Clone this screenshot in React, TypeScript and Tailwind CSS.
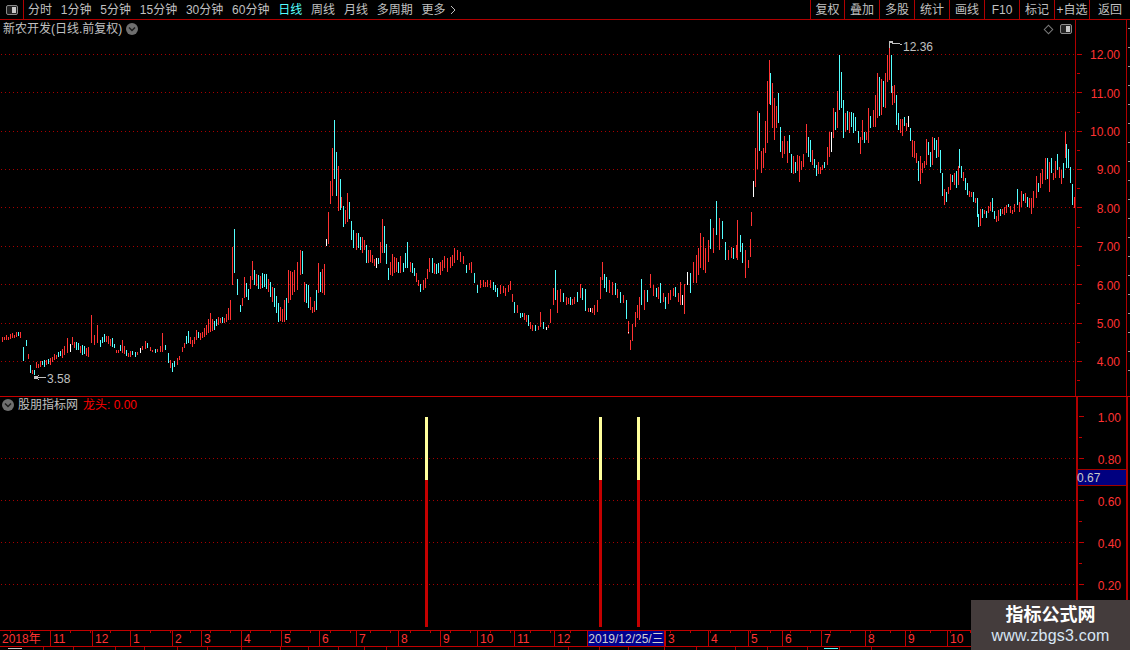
const FONT = "font-['Liberation_Sans','Noto_Sans_CJK_SC',sans-serif]";

// x hi lo [color override], read off the reference; gaps get filled in below
const RAW = `2 337 342,6 335 340,10 334 339,12 333 338,16 332 337,20 332 338,23 347 361 c,26 340 346 c,30 365 373 c,34 370 375 c,36 362 368,40 361 367,44 360 367 c,50 358 365,54 354 360,58 352 357 c,62 349 358,67 338 353,70 344 352 w,72 337 345,76 342 350 c,82 345 355 c,88 347 357,91 315 343,94 335 345,97 325 343,100 340 347 c,104 334 342 c,108 336 344,112 338 347 c,116 350 353,118 350 353,122 340 353,126 350 356 c,130 351 357,135 352 357 c,140 348 353 w,145 341 349,150 347 351,155 349 353 c,160 346 352,162 333 352,165 345 350 c,168 353 363 c,172 363 372 c,177 358 365,182 347 352,188 331 343 c,192 340 347,196 330 340,200 333 340,204 328 337,210 313 332,214 321 330 c,218 317 325,222 317 323 c,226 314 322,228 308 320,230 300 320,232 247 285,234 229 273 c,237 279 295 c,240 305 312 c,242 298 306,244 277 298,248 289 300 c,252 261 280,254 270 285 c,258 275 289 c,262 273 288 c,266 274 289 c,270 282 297 c,274 288 307 c,278 303 322 c,282 309 322,284 300 322,286 298 320 c,288 270 303,290 271 300,294 270 292,297 262 290,300 250 275,302 251 274 c,304 282 302,308 285 308 c,312 307 313,316 290 310 c,318 263 293,320 272 292 c,324 264 295,326 239 246 w,328 212 244,330 181 204,332 148 196,334 120 179 c,336 152 196 c,338 166 211,340 179 210 c,341 197 208,343 206 227 c,345 210 224,347 193 222,349 202 219 c,351 221 240 c,353 230 248 c,356 233 250,358 233 248 c,360 237 250 c,362 237 253,364 240 250,366 245 263 c,370 250 262,372 255 263,376 258 268 w,378 258 264 c,380 242 263,382 219 253,384 226 253 c,386 244 264 c,388 268 280 c,390 262 275,392 254 276,396 258 272,398 262 273 c,400 256 273,403 263 272 c,407 242 268 c,410 262 272,412 263 273 c,416 273 282,420 284 292 c,423 280 290,425 278 288,429 258 272,432 258 273 c,436 264 274 c,440 262 275,444 256 268,447 258 272,450 257 268,454 248 263,457 250 260,460 252 262,463 256 264,466 265 273 c,469 263 270,471 262 273,474 273 283 c,477 285 293 c,480 280 288,483 280 287,487 280 287,490 280 288,493 282 290 c,497 288 297 c,500 285 294,503 286 293,505 288 296,508 285 292,510 281 290,514 302 313 c,517 305 313,520 313 318 c,524 313 320,528 315 326 c,532 325 331,535 325 331 c,538 326 330,540 312 327,543 322 329 c,546 327 330 w,548 325 328,550 309 323,553 288 305,555 270 300 c,557 290 313,560 289 302,563 293 302 c,566 297 305,570 297 305 c,574 297 304,577 292 302 c,580 284 298,582 288 300 c,585 289 311 c,588 308 312,590 308 312 w,594 305 315,597 300 312,600 277 299,602 262 280,604 274 288 c,606 277 292 c,609 280 293,612 282 295,615 283 295 c,620 292 303 c,623 295 303,626 300 319 c,630 340 350,632 324 341,635 312 327,637 305 318,639 297 320,641 279 305 c,644 290 310,647 290 302 c,650 274 288,653 285 296,656 288 297 c,660 283 303 c,663 293 302,665 297 309 c,668 293 304,670 290 300,673 288 296,675 287 297 c,678 293 302,680 282 305,682 295 305 w,684 284 314,687 272 285 w,690 273 293 c,693 262 283,696 255 283,698 248 275,700 233 268,703 237 270,705 248 273,708 240 262,710 219 249 c,713 228 253,716 201 235 c,719 218 250,722 221 239 c,725 242 260 c,728 250 260,731 247 258,733 248 259 c,736 245 258,737 220 260,740 235 252 c,742 243 263 c,745 250 278,748 260 268,750 239 257,751 212 226,753 181 197 w,755 148 187,757 111 169,759 113 151 c,761 151 173,763 148 168,765 121 153,767 81 143,769 60 104,770 73 105 c,772 83 128,774 98 140,776 106 128,778 93 123 c,780 127 152 c,782 141 158,784 136 154,787 141 163,789 135 153 c,791 154 173 c,793 156 174,795 162 173 c,797 155 171,799 156 182,801 161 170,803 154 167,806 124 153,808 137 157 c,810 140 162 c,812 150 165,814 159 168 c,816 165 176 c,818 162 174,820 167 174,822 165 170,824 162 168 c,827 147 165,829 132 157,831 132 152 w,833 108 138,835 112 130 c,837 91 128,839 55 110 c,841 72 108 c,843 100 138 c,845 113 132,847 111 130 c,849 112 133,851 112 127 c,853 113 133 c,855 117 131 c,858 131 143 c,860 137 154,862 120 140,864 132 143 c,866 132 140,868 108 143,870 116 128 c,873 110 127,875 95 127,877 73 118,879 77 116 c,881 79 115,883 81 107 c,885 73 108,887 55 82,889 42 80,891 55 93 c,892 86 105,894 85 103,896 95 125 c,898 113 130 c,900 119 133,902 119 136,904 117 126 c,906 123 131,908 116 127 w,910 128 141 c,912 140 157,914 141 158,916 153 163,918 161 181 c,920 156 184,922 163 173,924 161 168,926 139 165,928 142 155 c,930 152 167 c,932 137 165,934 138 150 c,936 140 158 c,938 137 157,940 150 173 c,942 173 196 c,944 189 205,946 192 202 c,948 187 194,950 174 190,952 175 182 c,954 173 185,956 171 188 c,958 166 185,959 149 168 c,961 166 178 c,963 172 181,965 178 190 c,967 183 195 c,969 191 197,971 192 197,973 192 202 c,975 198 203,977 198 217 c,978 214 227 c,980 209 226,982 209 218 c,984 210 214,986 211 218 c,988 206 213,990 202 211,992 198 212 c,994 211 219 c,996 216 222,998 210 221,1000 209 216 c,1002 209 214,1004 207 215,1006 205 213,1008 204 207 c,1010 206 213,1012 210 214,1014 204 212,1017 189 205 c,1019 202 212,1021 191 207,1023 194 201 c,1025 193 203,1027 197 207 c,1029 198 208,1031 198 214,1033 191 208,1036 176 198,1038 183 192 c,1040 173 188,1042 169 184,1045 158 180,1047 158 179 c,1049 162 192,1051 158 173 c,1053 173 180,1055 161 178,1057 154 170 c,1059 167 178,1061 170 184,1063 163 178 c,1065 132 158,1066 144 168 c,1068 149 168 c,1070 167 183 c,1072 184 205 c,1074 197 208`;

type Bar = { x: number; hi: number; lo: number; color: string };

const RED = "#ff3232";
const CYAN = "#54ffff";

function buildBars(): Bar[] {
  const pts = RAW.split(",").map((s) => {
    const [x, hi, lo, c] = s.split(" ");
    return { x: +x, hi: +hi, lo: +lo, c };
  });
  const bars: Bar[] = [];
  pts.forEach((p, i) => {
    const color = p.c === "c" ? CYAN : p.c === "w" ? "#ffffff" : RED;
    bars.push({ x: p.x, hi: p.hi, lo: p.lo, color });
    const next = pts[i + 1];
    if (!next) return;
    // fill anything wider than one 2px slot, a bit shorter than the read bars
    for (let x = p.x + 2; x < next.x - 1; x += 2) {
      const t = (x - p.x) / (next.x - p.x);
      const wob = ((x * 7) % 3) - 1;
      const hi = Math.round(p.hi + (next.hi - p.hi) * t + wob) + 1;
      const lo = Math.round(p.lo + (next.lo - p.lo) * t + wob) - 1;
      bars.push({ x, hi, lo: Math.max(lo, hi + 2), color: x % 3 === 0 ? CYAN : RED });
    }
  });
  return bars;
}

const bars = buildBars();

function barPath(color: string) {
  return bars
    .filter((b) => b.color === color)
    .map((b) => `M${b.x + 0.5} ${b.hi}V${b.lo}`)
    .join("");
}

const periods = ["分时", "1分钟", "5分钟", "15分钟", "30分钟", "60分钟", "日线", "周线", "月线", "多周期"];
const tools = [
  ["复权", "w-[34px]"],
  ["叠加", "w-[35px]"],
  ["多股", "w-[35px]"],
  ["统计", "w-[35px]"],
  ["画线", "w-[35px]"],
  ["F10", "w-[35px]"],
  ["标记", "w-[35px]"],
  ["+自选", "w-[35px]"],
  ["返回", "w-[41px]"],
];
const prices = ["12.00", "11.00", "10.00", "9.00", "8.00", "7.00", "6.00", "5.00", "4.00"];
const levels = ["1.00", "0.80", "0.60", "0.40", "0.20"];
// [label, x of the divider on its left]
const months: [string, number][] = [
  ["11", 50], ["12", 92], ["1", 130], ["2", 172], ["3", 201], ["4", 241], ["5", 281], ["6", 319], ["7", 356],
  ["8", 398], ["9", 440], ["10", 477], ["11", 514], ["12", 554], ["3", 665], ["4", 708], ["5", 748], ["6", 782],
  ["7", 821], ["8", 865], ["9", 905], ["10", 947],
];
const footerStops = [43, 73, 115, 144, 177, 207, 241, 280, 308, 338, 364, 386, 568, 599, 628, 664, 696, 735, 767, 807, 839, 871];

function Chevron({ className }: { className: string }) {
  return (
    <svg viewBox="0 0 12 12" className={className}>
      <circle cx="6" cy="6" r="6" fill="#6f6f6f" />
      <path d="M3 4.5 6 7.5 9 4.5" fill="none" stroke="#1c1c1c" strokeWidth="1.5" />
    </svg>
  );
}

function PanelToggle({ className }: { className: string }) {
  return (
    <svg viewBox="0 0 12 10" className={className}>
      <rect x="0.5" y="0.5" width="11" height="9" rx="1.5" fill="#222" stroke="#8a8a8a" />
      <rect x="6" y="2" width="4" height="6" fill="#c8c8c8" />
    </svg>
  );
}

function Dots({ y, width }: { y: number; width: number }) {
  return <line x1="1" x2={width} y1={y + 0.5} y2={y + 0.5} stroke="#a80000" strokeDasharray="1 3" />;
}

function PriceChart() {
  return (
    <svg width="1075" height="376" viewBox="0 20 1075 376" shapeRendering="crispEdges" className="block">
      {[54, 92, 131, 169, 207, 246, 284, 323, 361].map((y) => (
        <Dots key={y} y={y} width={1075} />
      ))}
      <path d={barPath(RED)} stroke={RED} fill="none" />
      <path d={barPath(CYAN)} stroke={CYAN} fill="none" />
      <path d={barPath("#ffffff")} stroke="#ffffff" fill="none" />
      <rect x="628" y="332" width="1" height="1" fill="#fff" />
      <g stroke="#c0c0c0" fill="none">
        <path d="M889.5 48V41H893M890 42 895 44 898 43 902 45" />
        <path d="M36 377.5H46M36 377.5 39 375M36 377.5 39 380" />
      </g>
      <rect x="34" y="376" width="2" height="3" fill="#c0c0c0" />
    </svg>
  );
}

function IndicatorChart() {
  return (
    <svg width="1076" height="233" viewBox="0 397 1076 233" shapeRendering="crispEdges" className="block">
      {[458, 500, 542, 584].map((y) => (
        <Dots key={y} y={y} width={1075} />
      ))}
      {[425, 599, 637].map((x) => (
        <g key={x}>
          <rect x={x} y="417" width="3" height="63" fill="#ffff9c" />
          <rect x={x} y="480" width="3" height="147" fill="#c40000" />
        </g>
      ))}
    </svg>
  );
}

function AxisTicks({ major, minor, top, height }: { major: number[]; minor: number[]; top: number; height: number }) {
  return (
    <svg width="55" height={height} viewBox={`1075 ${top} 55 ${height}`} shapeRendering="crispEdges" className="absolute left-0 top-0">
      {major.map((y) => (
        <line key={y} x1="1076" x2="1081" y1={y + 0.5} y2={y + 0.5} stroke="#c00000" />
      ))}
      {minor.map((y) => (
        <line key={y} x1="1076" x2="1079" y1={y + 0.5} y2={y + 0.5} stroke="#c00000" />
      ))}
      {Array.from({ length: Math.floor(height / 19) }, (_, i) => top + 8 + i * 19).map((y) => (
        <line key={y} x1="1127" x2="1130" y1={y + 0.5} y2={y + 0.5} stroke="#9a9a9a" />
      ))}
    </svg>
  );
}

export default function App() {
  return (
    <div className={`${FONT} relative flex h-[650px] w-[1130px] flex-col overflow-hidden bg-black text-[12px] leading-none text-[#c0c0c0]`}>
      {/* toolbar */}
      <div className="flex h-[20px] shrink-0 items-center border-b border-[#b00000]">
        <div className="flex h-full w-[24px] items-center justify-center border-r border-[#b00000]">
          <PanelToggle className="h-[10px] w-[12px]" />
        </div>
        <div className="ml-[4px] flex items-center gap-[8.8px]">
          {periods.map((p) => (
            <span key={p} className={p === "日线" ? "text-[#54ffff]" : ""}>
              {p}
            </span>
          ))}
          <span className="flex items-center gap-[4px]">
            更多
            <svg viewBox="0 0 6 10" className="h-[10px] w-[6px]">
              <path d="M1 1 5 5 1 9" fill="none" stroke="#c0c0c0" />
            </svg>
          </span>
        </div>
        <div className="ml-auto flex h-full">
          {tools.map(([t, w]) => (
            <div key={t} className={`flex h-full items-center justify-center border-l border-[#b00000] ${w}`}>
              {t}
            </div>
          ))}
        </div>
      </div>

      {/* price pane */}
      <div className="flex h-[376px] shrink-0 border-b-0">
        <div className="relative w-[1075px]">
          <PriceChart />
          <div className="absolute left-[3px] top-[3px] flex items-center gap-[4px]">
            <span>新农开发(日线.前复权)</span>
            <Chevron className="h-[12px] w-[12px]" />
          </div>
          <div className="absolute right-[3px] top-[4px] flex items-center gap-[8px]">
            <div className="h-[7px] w-[7px] rotate-45 border border-[#7a7a7a]" />
            <PanelToggle className="h-[10px] w-[12px]" />
          </div>
          <span className="absolute left-[903px] top-[21px]">12.36</span>
          <span className="absolute left-[47px] top-[353px]">3.58</span>
        </div>
        <div className="relative flex-1 border-l border-[#b00000]">
          <AxisTicks
            top={20}
            height={376}
            major={[54, 92, 131, 169, 207, 246, 284, 323, 361]}
            minor={[73, 112, 150, 188, 227, 265, 303, 342, 380]}
          />
          <div className="relative mr-[3px] flex h-full flex-col border-r border-[#b00000] pr-[6px] pt-[16px] text-[#ff3232]">
            {prices.map((p) => (
              <div key={p} className="flex h-[38.4px] items-center justify-end">
                {p}
              </div>
            ))}
          </div>
        </div>
      </div>

      {/* indicator pane */}
      <div className="flex h-[234px] shrink-0 border-t border-[#c80000]">
        <div className="relative w-[1076px]">
          <IndicatorChart />
          <div className="absolute left-[2px] top-[2px] flex items-center">
            <Chevron className="h-[12px] w-[12px]" />
            <span className="ml-[4px]">股朋指标网</span>
            <span className="ml-[5px] text-[#ff0000]">龙头: 0.00</span>
          </div>
        </div>
        <div className="relative flex-1 border-l-2 border-[#b00000]">
          <AxisTicks
            top={397}
            height={233}
            major={[416, 458, 500, 542, 584]}
            minor={[437, 479, 521, 563, 605]}
          />
          <div className="relative mr-[2px] flex h-full flex-col border-r-2 border-[#b00000] pr-[5px] text-[#ff3232]">
            {levels.map((l) => (
              <div key={l} className="flex h-[42px] items-center justify-end">
                {l}
              </div>
            ))}
            <div className="absolute left-0 right-0 top-[72px] flex h-[17px] items-center border-y border-[#a00000] bg-[#000080] text-[#c8c8c8]">
              <span className="-ml-[1px]">0.67</span>
            </div>
          </div>
        </div>
      </div>

      {/* date axis */}
      <div className="relative h-[17px] shrink-0 border-y border-[#c00000] text-[#ff3232]">
        <span className="absolute left-[2px] top-[2px]">2018年</span>
        {months.map(([m, x]) => (
          <span key={x} className="absolute top-0 flex h-full items-center border-l border-[#c00000] pl-[2px]" style={{ left: x }}>
            {m}
          </span>
        ))}
        <svg width="1130" height="3" className="absolute left-0 top-0">
          {Array.from({ length: 56 }, (_, i) => 10 + i * 20).map((x) => (
            <line key={x} x1={x + 0.5} x2={x + 0.5} y1="0" y2="2" stroke="#c00000" />
          ))}
        </svg>
        <div className="absolute left-[587px] top-0 flex h-full w-[78px] items-center justify-center border-x border-[#c00000] bg-[#000090] text-[#d0d0d0]">
          2019/12/25/三
        </div>
      </div>

      {/* cut-off status row */}
      <div className="relative flex-1">
        {footerStops.map((x) => (
          <div key={x} className="absolute top-0 h-full w-px bg-[#b00000]" style={{ left: x }} />
        ))}
        <div className="absolute left-[8px] top-[1px] h-[1px] w-[14px] bg-[#c0c0c0]" />
        <div className="absolute left-[824px] top-[1px] h-[1px] w-[14px] bg-[#54ffff]" />
      </div>

      {/* watermark */}
      <div className="absolute bottom-0 right-0 flex h-[50px] w-[159px] flex-col items-center justify-center bg-[#443c3c]">
        <span className="text-[18px] font-bold leading-[22px] text-white">指标公式网</span>
        <span className="text-[16px] leading-[20px] tracking-[0.2px] text-[#d8e6f4]">www.zbgs3.com</span>
      </div>
    </div>
  );
}
